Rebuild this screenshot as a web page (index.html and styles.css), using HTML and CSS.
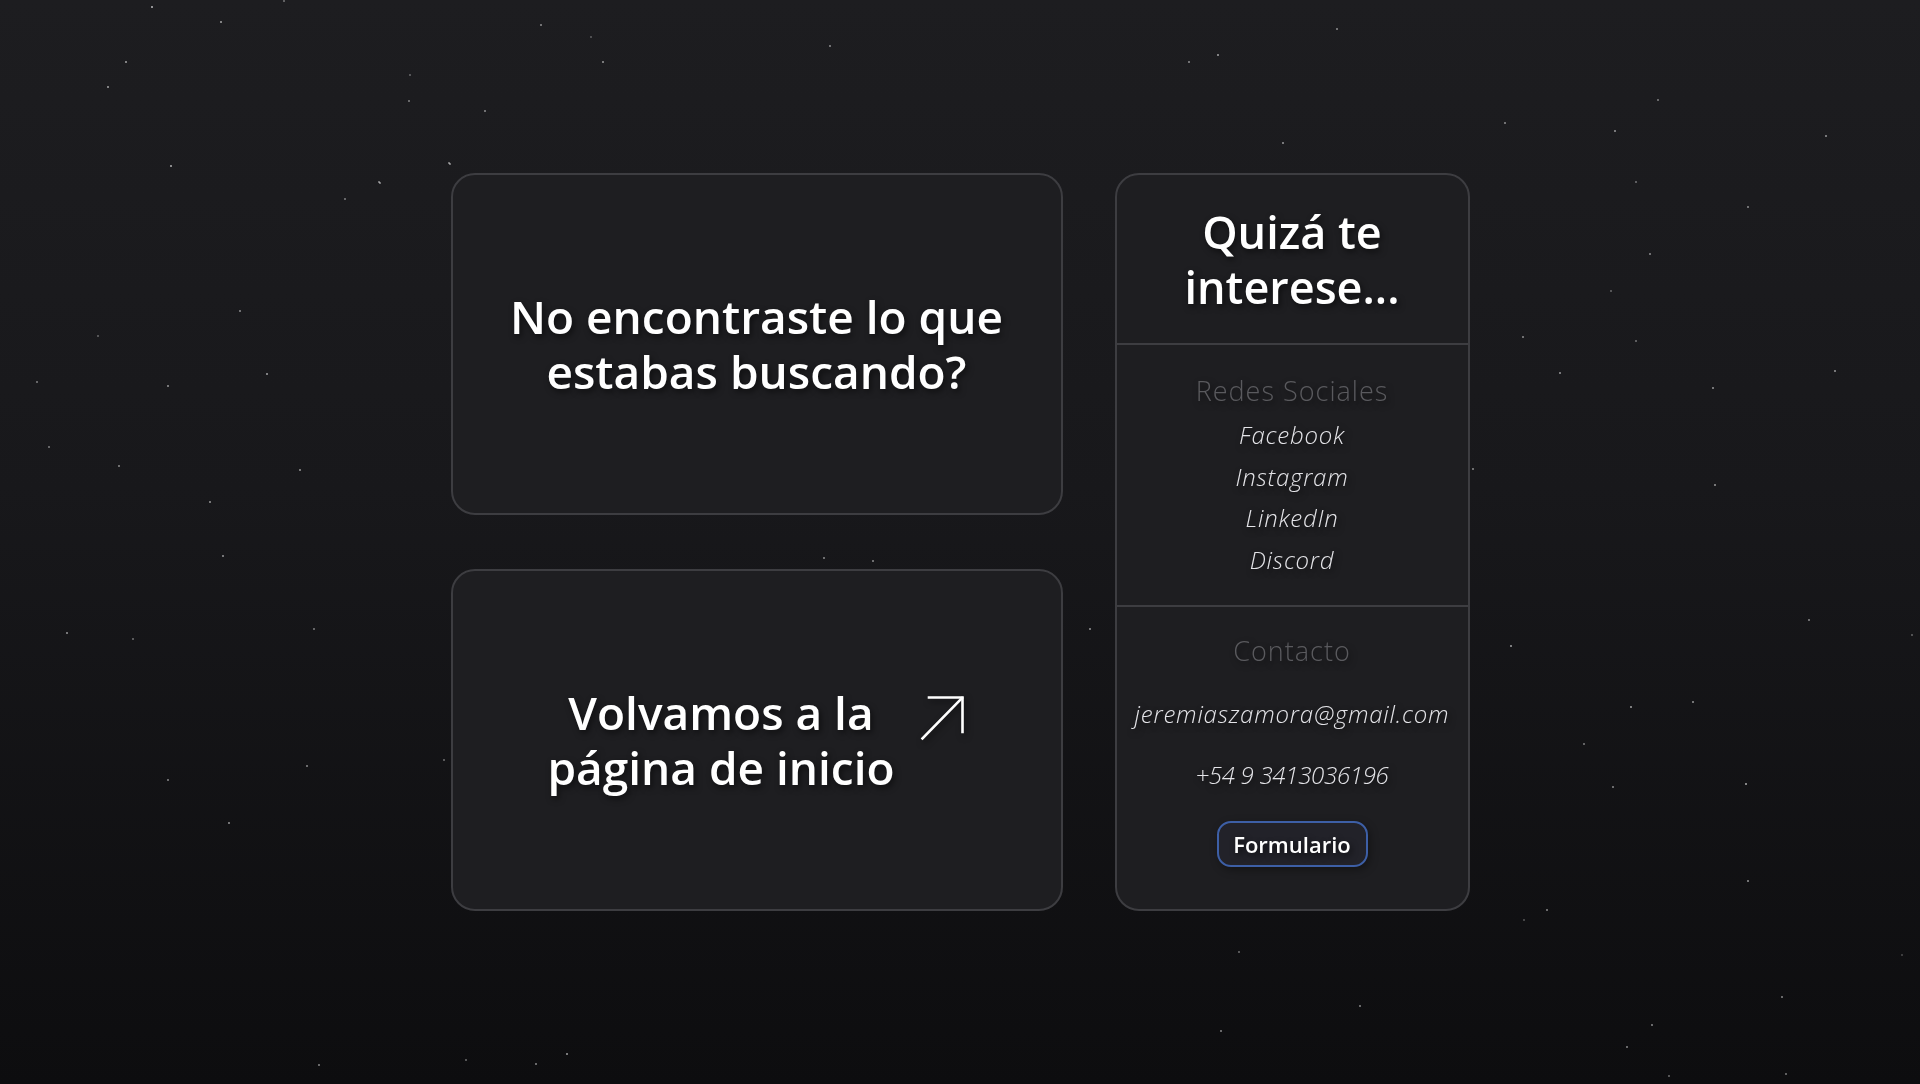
FILE: index.html
```html
<!DOCTYPE html>
<html lang="es">
<head>
<meta charset="utf-8">
<title>404 - No encontrado</title>
<link rel="stylesheet" href="styles.css">
</head>
<body>
<div class="stars" aria-hidden="true"></div>
<main class="layout">
  <section class="card card-msg">
    <h1 class="title">No encontraste lo que<br>estabas buscando?</h1>
  </section>
  <a class="card card-home" href="#">
    <span class="title">Volvamos a la<br>página de inicio</span>
    <svg class="arrow" width="46" height="46" viewBox="0 0 46 46" fill="none" stroke="#fff" stroke-width="2.6" stroke-linecap="square">
      <path d="M9 2.5H42.5V37"/>
      <path d="M2.5 43.5L42 3"/>
    </svg>
  </a>
  <aside class="card side">
    <div class="side-head">
      <h2 class="title">Quizá te<br>interese...</h2>
    </div>
    <div class="side-social">
      <h3 class="side-label">Redes Sociales</h3>
      <a class="side-link" href="#">Facebook</a>
      <a class="side-link" href="#">Instagram</a>
      <a class="side-link" href="#">LinkedIn</a>
      <a class="side-link" href="#">Discord</a>
    </div>
    <div class="side-contact">
      <h3 class="side-label">Contacto</h3>
      <a class="side-link" href="#">jeremiaszamora@gmail.com</a>
      <a class="side-link side-phone" href="#">+54 9 3413036196</a>
      <a class="btn" href="#">Formulario</a>
    </div>
  </aside>
</main>
</body>
</html>
```
FILE: styles.css
```css
* { box-sizing: border-box; }

html, body {
  margin: 0;
  padding: 0;
  height: 100%;
}

body {
  min-height: 1084px;
  background: linear-gradient(to bottom, #1d1d20 0%, #18181b 45%, #0d0d0f 100%);
  font-family: "Open Sans", "Lato", sans-serif;
  color: #fff;
  display: flex;
  align-items: center;
  justify-content: center;
  overflow: hidden;
}

.stars {
  position: fixed;
  left: 0;
  top: 0;
  width: 2px;
  height: 2px;
  border-radius: 50%;
  background: transparent;
  box-shadow:
    151px 6px rgba(255,255,255,.7), 220px 21px rgba(255,255,255,.6), 125px 61px rgba(255,255,255,.6),
    107px 86px rgba(255,255,255,.6), 540px 24px rgba(255,255,255,.5), 602px 61px rgba(255,255,255,.55),
    408px 100px rgba(255,255,255,.45), 484px 110px rgba(255,255,255,.5), 829px 45px rgba(255,255,255,.5),
    1188px 61px rgba(255,255,255,.5), 1217px 54px rgba(255,255,255,.6), 1336px 28px rgba(255,255,255,.5),
    1282px 142px rgba(255,255,255,.55), 1504px 122px rgba(255,255,255,.5), 1614px 130px rgba(255,255,255,.55),
    1657px 99px rgba(255,255,255,.45), 1825px 135px rgba(255,255,255,.55), 170px 165px rgba(255,255,255,.65),
    378px 181px rgba(255,255,255,.5), 448px 162px rgba(255,255,255,.5), 1635px 181px rgba(255,255,255,.4),
    1747px 206px rgba(255,255,255,.5), 1649px 253px rgba(255,255,255,.5), 1610px 290px rgba(255,255,255,.35),
    1522px 336px rgba(255,255,255,.5), 1635px 340px rgba(255,255,255,.4), 1559px 372px rgba(255,255,255,.55),
    1712px 387px rgba(255,255,255,.55), 1834px 370px rgba(255,255,255,.55), 1472px 468px rgba(255,255,255,.5),
    1714px 484px rgba(255,255,255,.55), 36px 381px rgba(255,255,255,.45), 167px 385px rgba(255,255,255,.55),
    266px 373px rgba(255,255,255,.6), 239px 310px rgba(255,255,255,.5), 48px 446px rgba(255,255,255,.45),
    118px 465px rgba(255,255,255,.5), 299px 469px rgba(255,255,255,.55), 209px 501px rgba(255,255,255,.55),
    222px 555px rgba(255,255,255,.55), 66px 632px rgba(255,255,255,.55), 132px 638px rgba(255,255,255,.4),
    313px 628px rgba(255,255,255,.45), 1089px 628px rgba(255,255,255,.55), 1510px 645px rgba(255,255,255,.6),
    1808px 619px rgba(255,255,255,.5), 1911px 634px rgba(255,255,255,.35), 1630px 706px rgba(255,255,255,.6),
    1692px 701px rgba(255,255,255,.55), 1583px 743px rgba(255,255,255,.45), 1745px 783px rgba(255,255,255,.65),
    1612px 786px rgba(255,255,255,.5), 167px 779px rgba(255,255,255,.5), 306px 765px rgba(255,255,255,.5),
    228px 822px rgba(255,255,255,.55), 443px 759px rgba(255,255,255,.4), 1747px 880px rgba(255,255,255,.55),
    1546px 909px rgba(255,255,255,.5), 1523px 919px rgba(255,255,255,.3), 1238px 951px rgba(255,255,255,.4),
    1901px 954px rgba(255,255,255,.25), 1781px 996px rgba(255,255,255,.5), 1359px 1005px rgba(255,255,255,.5),
    1651px 1024px rgba(255,255,255,.5), 1626px 1046px rgba(255,255,255,.5), 1220px 1030px rgba(255,255,255,.5),
    1785px 1073px rgba(255,255,255,.45), 566px 1053px rgba(255,255,255,.6), 535px 1063px rgba(255,255,255,.5),
    318px 1064px rgba(255,255,255,.5), 465px 1059px rgba(255,255,255,.4), 1668px 1075px rgba(255,255,255,.4),
    823px 557px rgba(255,255,255,.5), 872px 560px rgba(255,255,255,.5), 409px 74px rgba(255,255,255,.35),
    449px 163px rgba(255,255,255,.5), 379px 182px rgba(255,255,255,.5), 344px 198px rgba(255,255,255,.45),
    590px 36px rgba(255,255,255,.3), 283px 0px rgba(255,255,255,.4), 97px 335px rgba(255,255,255,.35);
}

.layout {
  position: relative;
  display: grid;
  grid-template-columns: 612px 355px;
  grid-template-rows: 342px 342px;
  column-gap: 52px;
  row-gap: 54px;
}

.card {
  background: #1e1e21;
  border: 2px solid #3d3d41;
  border-radius: 24px;
  color: #fff;
  text-decoration: none;
}

.title {
  margin: 0;
  font-size: 46px;
  line-height: 55px;
  font-weight: 600;
  text-align: center;
  color: #fff;
  text-shadow: 2px 3px 6px rgba(0,0,0,.55);
}

.card-msg {
  grid-column: 1;
  grid-row: 1;
  display: flex;
  align-items: center;
  justify-content: center;
}

.card-home {
  grid-column: 1;
  grid-row: 2;
  display: flex;
  align-items: center;
  justify-content: center;
  gap: 25px;
}

.arrow {
  margin-bottom: 44px;
  flex: none;
  filter: drop-shadow(2px 3px 3px rgba(0,0,0,.5));
}

.side {
  grid-column: 2;
  grid-row: 1 / 3;
  display: flex;
  flex-direction: column;
  overflow: hidden;
}

.side-head {
  height: 170px;
  flex: none;
  border-bottom: 2px solid #3d3d41;
  display: flex;
  align-items: center;
  justify-content: center;
}

.side-head .title {
  font-size: 45px;
}

.side-social {
  height: 262px;
  flex: none;
  border-bottom: 2px solid #3d3d41;
  display: flex;
  flex-direction: column;
  align-items: center;
  justify-content: center;
  padding-top: 4px;
}

.side-label {
  margin: 0;
  font-size: 27px;
  line-height: 34px;
  font-weight: 300;
  letter-spacing: 1px;
  color: #5a5a5e;
  text-shadow: 2px 3px 6px rgba(0,0,0,.5);
}

.side-social .side-label {
  margin-bottom: 6px;
}

.side-link {
  font-size: 24px;
  line-height: 41.5px;
  font-weight: 300;
  font-style: italic;
  letter-spacing: 0.8px;
  color: #e4e4e8;
  text-decoration: none;
  text-shadow: 2px 3px 6px rgba(0,0,0,.6);
}

.side-contact {
  flex: 1;
  display: flex;
  flex-direction: column;
  align-items: center;
  padding-top: 27px;
  gap: 31px;
}

.side-contact .side-link {
  line-height: 30px;
}

.side-contact .side-phone {
  letter-spacing: -0.3px;
}

.btn {
  display: flex;
  align-items: center;
  justify-content: center;
  width: 151px;
  height: 46px;
  border: 2px solid #3d5fa6;
  border-radius: 14px;
  background: #222229;
  color: #fff;
  font-size: 22px;
  font-weight: 600;
  text-decoration: none;
  text-shadow: 2px 3px 6px rgba(0,0,0,.6);
  box-shadow: 2px 3px 8px rgba(0,0,0,.35);
}
```
